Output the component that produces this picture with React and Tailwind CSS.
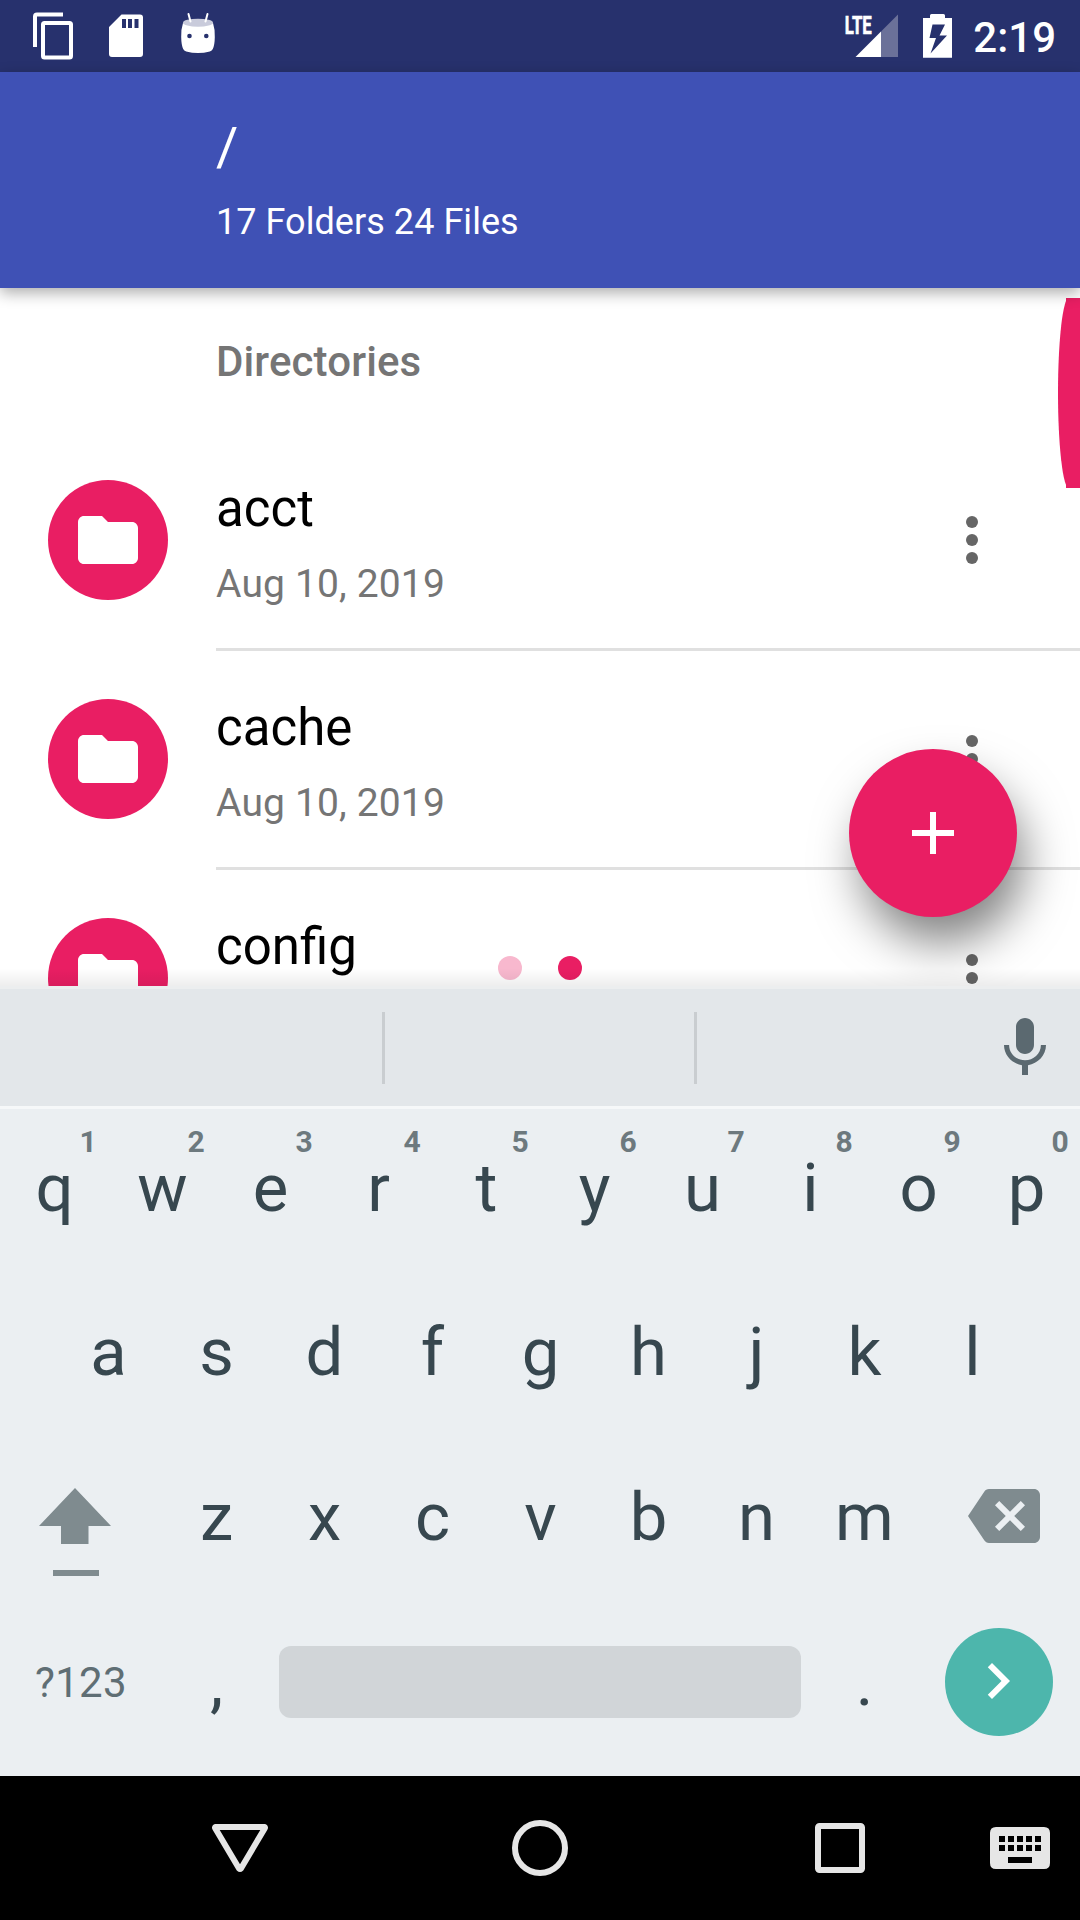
import React from "react";

const TOP_ROW = ["q", "w", "e", "r", "t", "y", "u", "i", "o", "p"];
const MIDDLE_ROW = ["a", "s", "d", "f", "g", "h", "j", "k", "l"];
const BOTTOM_ROW = ["z", "x", "c", "v", "b", "n", "m"];
const FOLDERS = [
  { name: "acct", date: "Aug 10, 2019" },
  { name: "cache", date: "Aug 10, 2019" },
  { name: "config", date: "Aug 10, 2019" },
];

function StatusBar() {
  return (
    <div className="flex h-[72px] shrink-0 items-start justify-between bg-[#27316d] text-white">
      <div className="flex">
        <svg className="ml-[30px] h-[72px] w-[46px]" viewBox="30 0 46 72" fill="none" stroke="currentColor" strokeWidth="4">
          <path d="M35 47V16.5q0-2 2-2H63" />
          <rect x="43" y="23" width="28" height="34.5" rx="1.5" />
        </svg>
        <svg className="ml-[31px] h-[72px] w-[38px]" viewBox="107 0 38 72" fill="currentColor">
          <path
            fillRule="evenodd"
            d="M121.5 14.5H140q3 0 3 3V54q0 3-3 3H112q-3 0-3-3V27ZM122 19v9h4v-9Zm6 0v9h4v-9Zm6.5 0v9h4v-9Z"
          />
        </svg>
        <svg className="ml-[34px] h-[72px] w-[38px]" viewBox="179 0 38 72">
          <path
            fill="#fff"
            d="M183 23q15 5.500 30 0q2 6 1.800 14q-.1 8-2 12q-.8 1.800-3 2.400q-11.800 3-23.600 0q-2.200-.6-3-2.400q-1.900-4-2-12q-.2-8 1.800-14z"
          />
          <ellipse cx="198" cy="22.700" rx="15" ry="4" fill="#c9cbdb" />
          <path d="M188.500 14l2 7.500M207.500 14l-2 7.500" stroke="#fff" strokeWidth="2" strokeLinecap="round" />
          <circle cx="189.500" cy="36" r="2.300" fill="#27316d" />
          <circle cx="206.300" cy="36" r="2.300" fill="#27316d" />
        </svg>
      </div>
      <div className="flex">
        <svg className="h-[72px] w-[56px]" viewBox="844 0 56 72">
          <path d="M898 14.500V57H881V31.500Z" fill="#6b7199" />
          <path d="M881 31.500V57H855.500Z" fill="#fff" />
          <text
            x="844.700"
            y="33.600"
            fill="#fff"
            stroke="#fff"
            strokeWidth="0.700"
            className="font-['Roboto',sans-serif] text-[26.500px] font-bold"
            textLength="27"
            lengthAdjust="spacingAndGlyphs"
          >
            LTE
          </text>
        </svg>
        <svg className="ml-[21px] h-[72px] w-[33px]" viewBox="921 0 33 72" fill="#fff">
          <path
            fillRule="evenodd"
            d="M930 18v-2.500q0-1.500 1.500-1.500h12q1.500 0 1.500 1.500V18h7v39.700h-29V18ZM932.500 24.500L929.500 38H936L930.500 53.500L947 35.500H939.500L945 24.500Z"
          />
        </svg>
        <span className="ml-[19px] mr-[24px] mt-[10px] text-[42px] font-medium leading-[56px]">2:19</span>
      </div>
    </div>
  );
}

function FolderRow({ name, date }) {
  return (
    <div className="flex h-[219px] shrink-0">
      <div className="ml-12 mt-12 flex h-[120px] w-[120px] shrink-0 items-center justify-center rounded-full bg-[#e91e63]">
        <svg className="h-[72px] w-[72px]" viewBox="0 0 24 24" fill="#fff">
          <path d="M10 4H4c-1.100 0-1.990.9-1.990 2L2 18c0 1.100.9 2 2 2h16c1.100 0 2-.9 2-2V8c0-1.100-.9-2-2-2h-8l-2-2z" />
        </svg>
      </div>
      <div className="ml-12 flex grow justify-between border-b-[3px] border-[#e0e0e0]">
        <div className="pt-[47px]">
          <div className="text-[51px] leading-[60px] text-black">{name}</div>
          <div className="mt-[21px] text-[39px] leading-[48px] tracking-[0.15px] text-[#757575]">{date}</div>
        </div>
        <svg className="mr-[72px] mt-[72px] h-[72px] w-[72px]" viewBox="0 0 24 24" fill="#666">
          <circle cx="12" cy="6" r="2" />
          <circle cx="12" cy="12" r="2" />
          <circle cx="12" cy="18" r="2" />
        </svg>
      </div>
    </div>
  );
}

function Key({ label, hint }) {
  return (
    <div className="relative w-[108px] shrink-0 pl-px text-center">
      {label}
      {hint && (
        <span className="absolute left-[68px] top-[15px] w-10 text-center text-[30px] font-bold leading-[36px] text-[#6d797e]">
          {hint}
        </span>
      )}
    </div>
  );
}

function Keyboard() {
  return (
    <div className="relative h-[790px] shrink-0 bg-[#ebeff2] text-[67px] text-[#37474f]">
      <div className="absolute bottom-full left-0 h-[18px] w-full bg-linear-to-b from-black/0 to-black/7" />
      <div className="flex h-[123px] items-start border-y-[3px] border-t-[#eceeef] border-b-[#f6f8f9] bg-[#e3e7ea]">
        <div className="ml-[382px] mt-[23px] h-[72px] w-[3px] bg-[#c9cdd0]" />
        <div className="ml-[309px] mt-[23px] h-[72px] w-[3px] bg-[#c9cdd0]" />
        <svg className="ml-[292px] mt-[23px] h-[72px] w-[72px]" viewBox="0 0 24 24" fill="#5b6970">
          <path d="M12 14c1.660 0 2.990-1.340 2.990-3L15 5c0-1.660-1.340-3-3-3S9 3.340 9 5v6c0 1.660 1.340 3 3 3zm5.300-3c0 3-2.540 5.100-5.300 5.100S6.700 14 6.700 11H5c0 3.410 2.720 6.230 6 6.720V21h2v-3.280c3.280-.48 6-3.300 6-6.720h-1.700z" />
        </svg>
      </div>
      <div className="flex h-[161px] leading-[158px]">
        {TOP_ROW.map((k, i) => (
          <Key key={k} label={k} hint={String((i + 1) % 10)} />
        ))}
      </div>
      <div className="flex h-[165px] justify-center leading-[165px]">
        {MIDDLE_ROW.map((k) => (
          <Key key={k} label={k} />
        ))}
      </div>
      <div className="flex h-[165px] leading-[165px]">
        <div className="w-[162px] shrink-0">
          <svg className="ml-[36px] mt-[50px] h-[94px] w-[78px]" viewBox="36 1485 78 94" fill="#7f8b8f">
            <path d="M75 1488l36 38H88.500v18H61v-18H39z" />
            <path d="M53 1570h46v6H53z" />
          </svg>
        </div>
        {BOTTOM_ROW.map((k) => (
          <Key key={k} label={k} />
        ))}
        <svg className="ml-[50px] mt-[45px] h-[72px] w-[72px]" viewBox="0 0 24 24" fill="#7f8b8f">
          <path d="M22 3H7c-.69 0-1.230.35-1.590.88L0 12l5.410 8.110c.36.53.9.89 1.590.89h15c1.100 0 2-.9 2-2V5c0-1.100-.9-2-2-2zm-3 12.590L17.590 17 14 13.410 10.410 17 9 15.590 12.590 12 9 8.410 10.410 7 14 10.590 17.590 7 19 8.410 15.410 12 19 15.590z" />
        </svg>
      </div>
      <div className="flex h-[164px] items-center leading-[164px]">
        <div className="w-[162px] pt-px text-center text-[42px] tracking-[0.3px] text-[#5f6e74]">?123</div>
        <Key label="," />
        <div className="mx-[9px] h-[72px] w-[522px] rounded-xl bg-[#d1d5d8]" />
        <Key label="." />
        <div className="ml-[27px] flex h-[108px] w-[108px] items-center justify-center rounded-full bg-[#4db6ac]">
          <svg className="mr-[2px] mt-[-2px] h-[72px] w-[72px]" viewBox="0 0 24 24" fill="#fff">
            <path d="M10 6L8.590 7.410 13.170 12l-4.580 4.590L10 18l6-6z" />
          </svg>
        </div>
      </div>
    </div>
  );
}

function NavigationBar() {
  return (
    <div className="flex h-36 shrink-0 items-center bg-black text-[#e6e6e6]">
      <svg className="ml-[204px] h-[72px] w-[72px]" viewBox="204 1812 72 72" fill="none" stroke="currentColor" strokeWidth="6" strokeLinejoin="round">
        <path d="M215.500 1827h49q.8.400.3 1.200l-24 40.500q-.8.800-1.600 0l-24-40.500q-.5-.8.300-1.200z" />
      </svg>
      <svg className="ml-[228px] h-[72px] w-[72px]" viewBox="0 0 72 72" fill="none" stroke="currentColor" strokeWidth="6">
        <circle cx="36" cy="36" r="25" />
      </svg>
      <svg className="ml-[228px] h-[72px] w-[72px]" viewBox="0 0 72 72" fill="none" stroke="currentColor" strokeWidth="6">
        <rect x="14" y="14" width="44" height="44" rx="1.500" />
      </svg>
      <svg className="ml-[108px] h-[72px] w-[72px]" viewBox="0 0 24 24" fill="currentColor">
        <path
          fillRule="evenodd"
          d="M4 5h16q2 0 2 2v10q0 2-2 2H4q-2 0-2-2V7q0-2 2-2zM5 8v2h2V8zm3 0v2h2V8zm3 0v2h2V8zm3 0v2h2V8zm3 0v2h2V8zM5 11v2h2v-2zm3 0v2h2v-2zm3 0v2h2v-2zm3 0v2h2v-2zm3 0v2h2v-2zM8 15v2h8v-2z"
        />
      </svg>
    </div>
  );
}

export default function App() {
  return (
    <div className="flex h-[1920px] w-[1080px] flex-col overflow-hidden bg-white font-['Roboto',sans-serif]">
      <StatusBar />
      <header className="relative z-10 h-[216px] shrink-0 bg-[#3f51b5] pl-[216px] pt-[43px] text-white shadow-[0_5px_14px_rgba(0,0,0,0.32)]">
        <div className="text-[54px] leading-[64px]">/</div>
        <div className="mt-[21px] text-[36px] leading-[44px] tracking-[0.05px]">17 Folders 24 Files</div>
      </header>
      <main className="relative flex h-[698px] shrink-0 flex-col overflow-hidden">
        <h2 className="h-36 shrink-0 pl-[216px] pt-[46px] text-[42px] font-medium leading-[56px] tracking-[0.12px] text-[#757575]">
          Directories
        </h2>
        {FOLDERS.map((f) => (
          <FolderRow key={f.name} {...f} />
        ))}
        {/* Fast-scroll handle */}
        <svg className="absolute right-0 top-[10px] h-[190px] w-[24px]" viewBox="0 0 24 190" fill="#e91e63">
          <ellipse cx="13" cy="95" rx="11" ry="95.500" />
          <path d="M10 0h14v190H10z" />
        </svg>
        <div className="absolute left-[498px] top-[668px] flex gap-9">
          <span className="h-6 w-6 rounded-full bg-[#f8b8ce]" />
          <span className="h-6 w-6 rounded-full bg-[#e91e63]" />
        </div>
        <button className="absolute left-[849px] top-[461px] flex h-[168px] w-[168px] items-center justify-center rounded-full bg-[#e91e63] shadow-[9px_28px_48px_-3px_rgba(0,0,0,0.5)]">
          <svg className="h-[72px] w-[72px]" viewBox="0 0 24 24" fill="#fff">
            <path d="M19 13h-6v6h-2v-6H5v-2h6V5h2v6h6v2z" />
          </svg>
        </button>
      </main>
      <Keyboard />
      <NavigationBar />
    </div>
  );
}
